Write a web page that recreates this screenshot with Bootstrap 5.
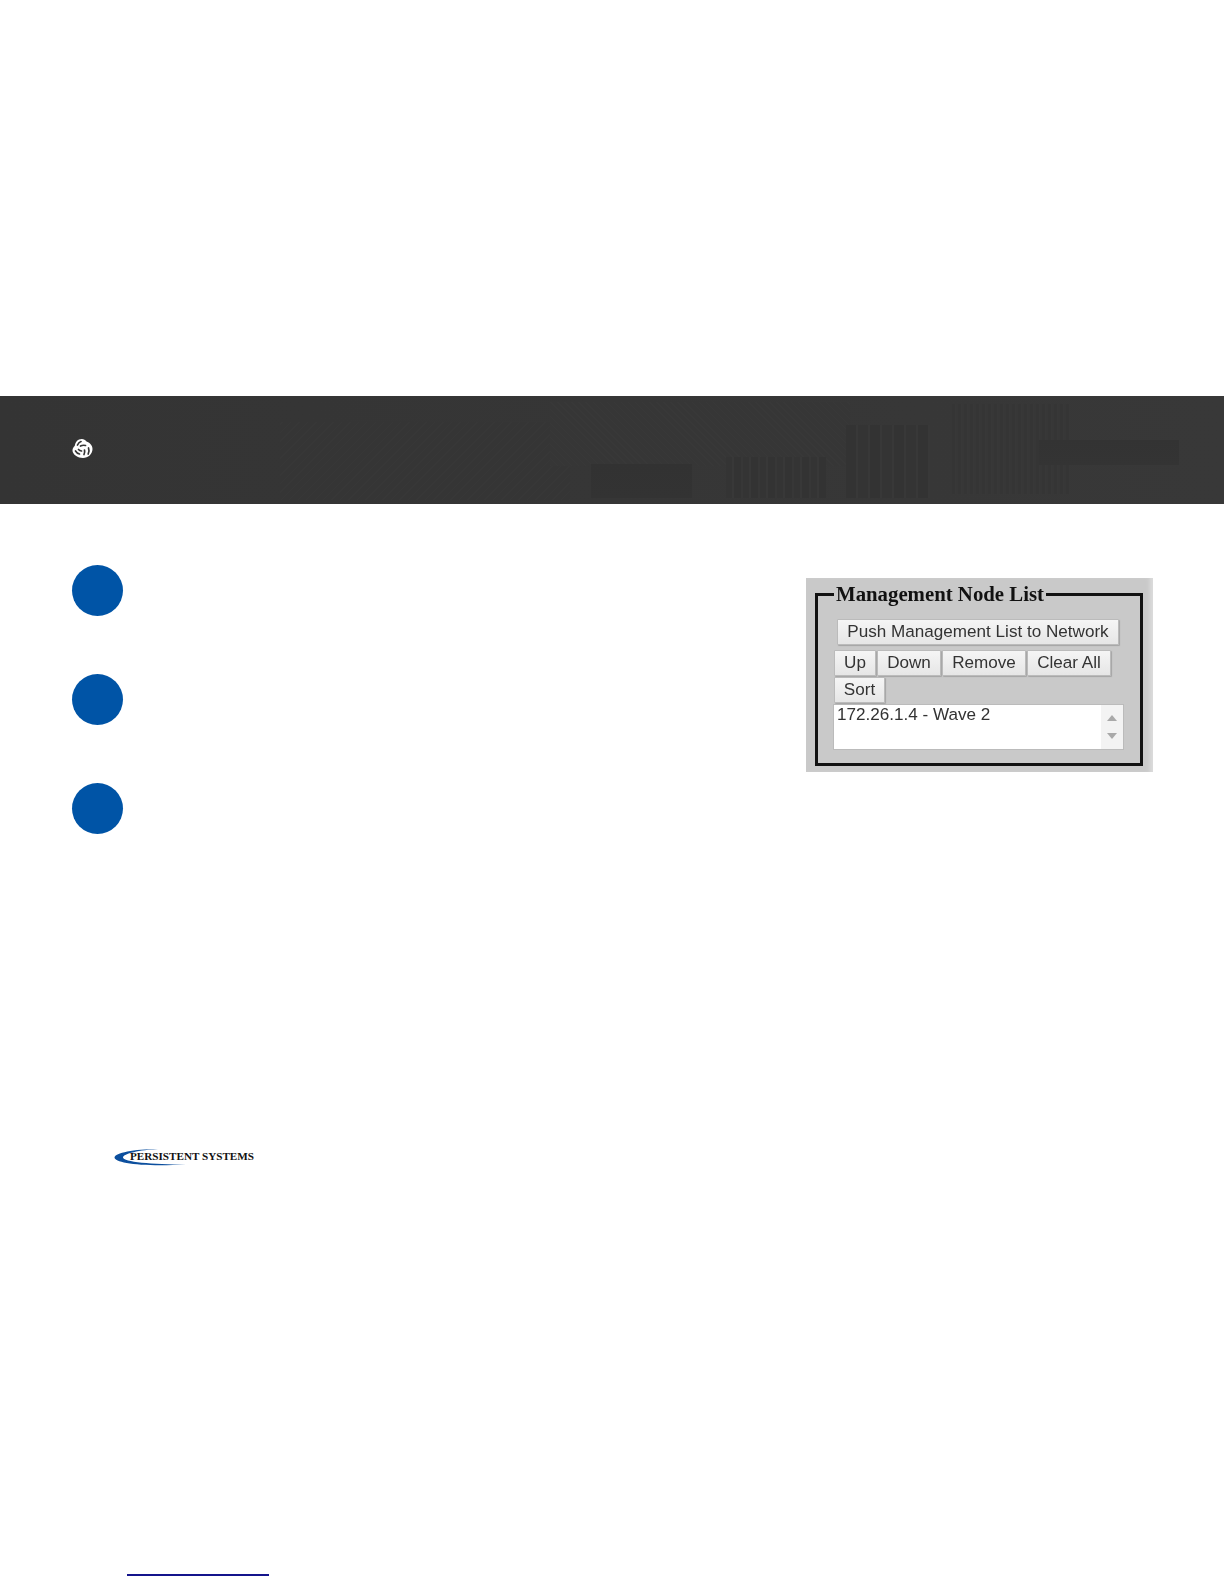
<!DOCTYPE html>
<html lang="en">
<head>
<meta charset="utf-8">
<title>Management Node List</title>
<link href="https://cdn.jsdelivr.net/npm/bootstrap@5.3.0/dist/css/bootstrap.min.css" rel="stylesheet">
<style>
body { background: #fff; height: 1584px; overflow: hidden; }
.hero-band {
  margin-top: 396px; height: 108px; padding: 0 0 4px 72px;
  background-color: #363636;
  background-image:
    linear-gradient(#323232, #333),
    repeating-linear-gradient(90deg, #343434 0 6px, #383838 6px 8px, #333 8px 15px, #373737 15px 17px),
    repeating-linear-gradient(90deg, #333 0 10px, #383838 10px 12px, #343434 12px 22px, #383838 22px 24px),
    linear-gradient(#333, #343434),
    repeating-linear-gradient(90deg, #373737 0 2px, #353535 2px 5px, #383838 5px 6px),
    repeating-linear-gradient(45deg, #383838 0 1px, #363636 1px 5px),
    repeating-linear-gradient(-45deg, #373737 0 1px, #353535 1px 6px),
    linear-gradient(90deg, #343434, #383838);
  background-size: 101px 34px, 100px 41px, 84px 73px, 140px 25px, 120px 90px, 300px 64px, 290px 78px, 100% 100%;
  background-position: 591px 68px, 726px 61px, 846px 29px, 1039px 44px, 950px 8px, 550px 6px, 280px 26px, 0 0;
  background-repeat: no-repeat;
}
.main-area { padding: 61px 71px 0 72px; height: 639px; }
.step-stack { gap: 58px; }
.step-dot { width: 51px; height: 51px; background: #0054a6; }
.node-shot {
  width: 347px; height: 194px; margin-top: 13px; padding: 4px 10px 6px 9px;
  background: #c9c9c9; box-shadow: inset -5px 0 4px -2px #ddd;
  font-family: "Liberation Sans", Arial, sans-serif; filter: blur(.4px);
}
.node-set { border: 3px solid #111; height: 100%; margin: 0; padding: 0 16px; min-width: 0; }
.node-title {
  float: none; width: auto; margin: 0; padding: 0 2px;
  font: bold 20.8px/24px "Liberation Serif", "Times New Roman", serif; color: #111;
}
.node-btn {
  font: 17.1px/22px "Liberation Sans", Arial, sans-serif; color: #333; padding: 1px 0; height: 26px;
  background: linear-gradient(#f5f5f5, #e6e6e6); border: 1px solid #bbb; border-radius: 1px;
  box-shadow: 1px 1px 1px #a5a5a5;
}
.node-btn:hover { color: #333; background: #eee; border-color: #bbb; }
.push-btn { display: block; width: 282px; margin: 13px 0 5px 3px; }
.btn-line { gap: 1px; margin-bottom: 1px; }
.w-up { width: 42px; } .w-down { width: 64px; } .w-remove { width: 84px; } .w-clear { width: 84px; } .w-sort { width: 51px; }
.node-box {
  width: 291px; height: 46px; margin-left: -1px; background: #fff; border: 1px solid #bbb; color: #333;
  font-size: 17.1px; line-height: 20px; padding: 0 3px;
}
.box-scroll { width: 22px; margin-right: -3px; background: #f3f3f3; }
.scroll-up { border: 5px solid transparent; border-top: 0; border-bottom: 6px solid #a9a9a9; }
.scroll-down { border: 5px solid transparent; border-bottom: 0; border-top: 6px solid #a9a9a9; }
.brand-mark { margin-left: 114px; height: 24px; }
.brand-mark text { font: bold 11.3px "Liberation Serif", "Times New Roman", serif; fill: #111; }
.foot-rule { width: 142px; margin: 407px 0 0 127px; border-top: 2px solid #14148c; }
</style>
</head>
<body>
<header class="hero-band d-flex align-items-center">
  <svg width="21" height="21" viewBox="0 0 21 21" aria-label="logo">
    <path d="M7 1.500c3-1.200 6-.5 7.500 2 3 1 6 3.500 6 7.500 0 5-4.500 9-9.500 9S.5 16.500.5 12.500c0-2 1-3.500 2.200-4.500C3.300 5 4.500 2.500 7 1.500z" fill="#fff"/>
    <g fill="none" stroke="#353535" stroke-width="1.700" stroke-linecap="round">
      <path d="M5.500 7c.8-1.800 2-3 3.500-3.500"/>
      <path d="M8.500 8c1.500-.8 3-1 5-.5"/>
      <path d="M16.500 10c.8 2 .6 4-.3 6"/>
      <path d="M12.500 12c.4 1.500.2 3-.5 4.500"/>
      <path d="M3.500 13c.9 1.500 2.200 2.500 4 3"/>
      <path d="M6.500 11.500c.8.800 1.800 1.300 3 1.500"/>
    </g>
  </svg>
</header>
<main class="main-area d-flex justify-content-between align-items-start">
  <div class="step-stack d-flex flex-column">
    <div class="step-dot rounded-circle"></div>
    <div class="step-dot rounded-circle"></div>
    <div class="step-dot rounded-circle"></div>
  </div>
  <div class="node-shot">
    <fieldset class="node-set">
      <legend class="node-title">Management Node List</legend>
      <button type="button" class="btn node-btn push-btn">Push Management List to Network</button>
      <div class="d-flex btn-line">
        <button type="button" class="btn node-btn w-up">Up</button>
        <button type="button" class="btn node-btn w-down">Down</button>
        <button type="button" class="btn node-btn w-remove">Remove</button>
        <button type="button" class="btn node-btn w-clear">Clear All</button>
      </div>
      <div class="d-flex btn-line">
        <button type="button" class="btn node-btn w-sort">Sort</button>
      </div>
      <div class="node-box d-flex justify-content-between">
        <span>172.26.1.4 - Wave 2</span>
        <div class="box-scroll d-flex flex-column align-items-center justify-content-around py-1">
          <div class="scroll-up"></div>
          <div class="scroll-down"></div>
        </div>
      </div>
    </fieldset>
  </div>
</main>
<div class="brand-mark">
  <svg width="142" height="24" viewBox="0 0 142 24">
    <path d="M44 4C20 4 1 8 .5 12.500.5 18 28 22 72 19.500 38 19.500 9 17 9 12.500 9 8.500 26 5 44 4z" fill="#0c4f9e"/>
    <text x="16" y="15" textLength="124" lengthAdjust="spacingAndGlyphs">PERSISTENT SYSTEMS</text>
  </svg>
</div>
<div class="foot-rule"></div>
<script src="https://cdn.jsdelivr.net/npm/bootstrap@5.3.0/dist/js/bootstrap.bundle.min.js"></script>
</body>
</html>
